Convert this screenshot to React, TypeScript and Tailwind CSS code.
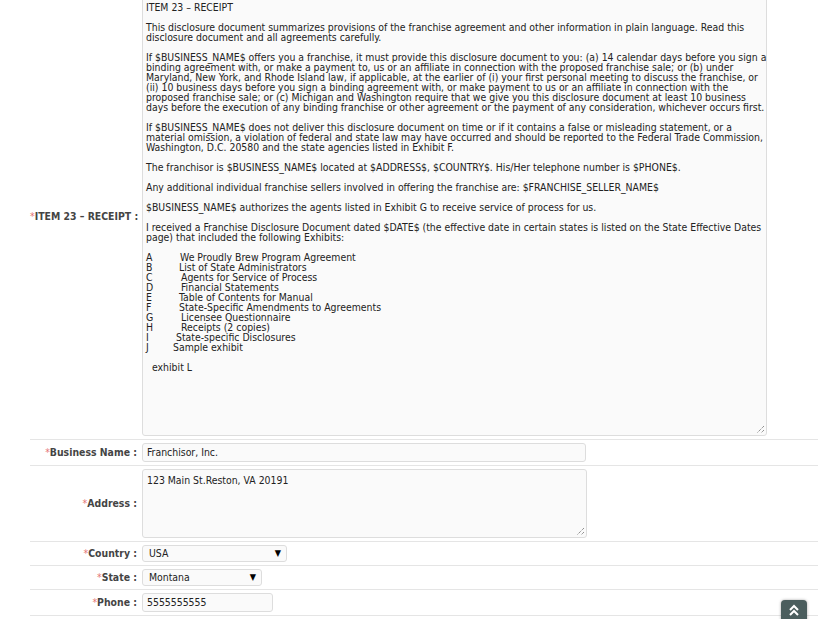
import React from 'react';

const font = { fontFamily: '"DejaVu Sans Condensed", "DejaVu Sans", sans-serif' };

const paragraphs: string[][] = [
  ['ITEM 23 – RECEIPT'],
  [
    'This disclosure document summarizes provisions of the franchise agreement and other information in plain language. Read this',
    'disclosure document and all agreements carefully.',
  ],
  [
    'If $BUSINESS_NAME$ offers you a franchise, it must provide this disclosure document to you: (a) 14 calendar days before you sign a',
    'binding agreement with, or make a payment to, us or an affiliate in connection with the proposed franchise sale; or (b) under',
    'Maryland, New York, and Rhode Island law, if applicable, at the earlier of (i) your first personal meeting to discuss the franchise, or',
    '(ii) 10 business days before you sign a binding agreement with, or make payment to us or an affiliate in connection with the',
    'proposed franchise sale; or (c) Michigan and Washington require that we give you this disclosure document at least 10 business',
    'days before the execution of any binding franchise or other agreement or the payment of any consideration, whichever occurs first.',
  ],
  [
    'If $BUSINESS_NAME$ does not deliver this disclosure document on time or if it contains a false or misleading statement, or a',
    'material omission, a violation of federal and state law may have occurred and should be reported to the Federal Trade Commission,',
    'Washington, D.C. 20580 and the state agencies listed in Exhibit F.',
  ],
  ['The franchisor is $BUSINESS_NAME$ located at $ADDRESS$, $COUNTRY$. His/Her telephone number is $PHONE$.'],
  ['Any additional individual franchise sellers involved in offering the franchise are: $FRANCHISE_SELLER_NAME$'],
  ['$BUSINESS_NAME$ authorizes the agents listed in Exhibit G to receive service of process for us.'],
  [
    'I received a Franchise Disclosure Document dated $DATE$ (the effective date in certain states is listed on the State Effective Dates',
    'page) that included the following Exhibits:',
  ],
];

const exhibits: { letter: string; text: string; pad: string }[] = [
  { letter: 'A', text: 'We Proudly Brew Program Agreement', pad: 'pl-[34px]' },
  { letter: 'B', text: 'List of State Administrators', pad: 'pl-[33px]' },
  { letter: 'C', text: 'Agents for Service of Process', pad: 'pl-[35px]' },
  { letter: 'D', text: 'Financial Statements', pad: 'pl-[35px]' },
  { letter: 'E', text: 'Table of Contents for Manual', pad: 'pl-[33px]' },
  { letter: 'F', text: 'State-Specific Amendments to Agreements', pad: 'pl-[33px]' },
  { letter: 'G', text: 'Licensee Questionnaire', pad: 'pl-[35px]' },
  { letter: 'H', text: 'Receipts (2 copies)', pad: 'pl-[35px]' },
  { letter: 'I', text: 'State-specific Disclosures', pad: 'pl-[30px]' },
  { letter: 'J', text: 'Sample exhibit', pad: 'pl-[27px]' },
];

const Label: React.FC<{ text: string }> = ({ text }) => (
  <div className="w-[112px] shrink-0 pr-[5px] text-right text-[10.4px] font-bold text-[#444] whitespace-nowrap">
    <span className="text-[#e57373] font-normal">*</span>
    {text} :
  </div>
);

const Grip: React.FC = () => (
  <svg className="absolute right-[1px] bottom-[1px]" width="9" height="9" viewBox="0 0 9 9">
    <path d="M8 1 L1 8 M8 5 L5 8" stroke="#666" strokeWidth="1" strokeDasharray="1 1" fill="none" />
  </svg>
);

const Row: React.FC<{ label: string; children: React.ReactNode }> = ({ label, children }) => (
  <div className="flex items-center border-b border-[#e5e5e5] py-[3px]">
    <Label text={label} />
    {children}
  </div>
);

const box = 'rounded-[3px] border border-[#ddd] bg-[#fafafa] text-[10.4px] text-[#222]';

export default function App() {
  return (
    <div className="relative w-[818px] h-[619px] overflow-hidden bg-white text-[#333]" style={font}>
      <div className="ml-[30px] -mt-[6px]">
        <Row label="ITEM 23 – RECEIPT">
          <div className={`relative h-[439px] w-[625px] px-[3px] pt-[4px] leading-[10px] ${box}`}>
            {paragraphs.map((p, i) => (
              <div key={i} className="mb-[10px]">
                {p.map((line, j) => (
                  <div key={j} className="whitespace-pre">{line}</div>
                ))}
              </div>
            ))}
            <div className="mb-[10px]">
              {exhibits.map((e) => (
                <div key={e.letter} className="flex whitespace-pre">
                  <span className="w-0">{e.letter}</span>
                  <span className={e.pad}>{e.text}</span>
                </div>
              ))}
            </div>
            <div className="pl-[6px]">exhibit L</div>
            <Grip />
          </div>
        </Row>
        <Row label="Business Name">
          <div className={`h-[19px] w-[444px] px-[4px] leading-[17px] ${box}`}>Franchisor, Inc.</div>
        </Row>
        <Row label="Address">
          <div className={`relative h-[69px] w-[445px] px-[4px] pt-[4px] leading-[12px] ${box}`}>
            123 Main St.Reston, VA 20191
            <Grip />
          </div>
        </Row>
        <Row label="Country">
          <div className={`flex h-[17px] w-[145px] items-center justify-between pl-[6px] pr-[5px] ${box}`}>
            <span>USA</span>
            <span className="text-[9px] text-black">▼</span>
          </div>
        </Row>
        <Row label="State">
          <div className={`flex h-[17px] w-[120px] items-center justify-between pl-[6px] pr-[5px] ${box}`}>
            <span>Montana</span>
            <span className="text-[9px] text-black">▼</span>
          </div>
        </Row>
        <Row label="Phone">
          <div className={`h-[19px] w-[131px] px-[4px] leading-[17px] ${box}`}>5555555555</div>
        </Row>
      </div>
      <button className="absolute left-[781px] top-[600px] flex h-[26px] w-[26px] items-start justify-center rounded-[4px] bg-[#4b5e5e] pt-[3px] shadow-[0_0_3px_rgba(0,0,0,0.35)]">
        <svg width="12" height="14" viewBox="0 0 12 14">
          <path d="M2 7 L6 3 L10 7 M2 12 L6 8 L10 12" stroke="white" strokeWidth="2" fill="none" />
        </svg>
      </button>
    </div>
  );
}
